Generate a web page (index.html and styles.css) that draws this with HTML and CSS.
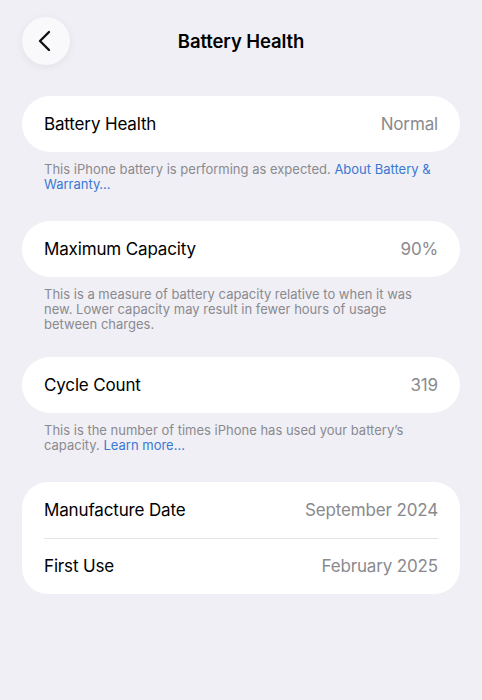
FILE: index.html
```html
<!DOCTYPE html>
<html lang="en">
<head>
<meta charset="utf-8">
<title>Battery Health</title>
<link rel="stylesheet" href="styles.css">
</head>
<body>
<div class="screen">
  <header class="nav">
    <button class="back" aria-label="Back">
      <svg width="16" height="22" viewBox="0 0 16 22"><path d="M12 2 L3 11 L12 20" fill="none" stroke="#111" stroke-width="2.4" stroke-linecap="round" stroke-linejoin="round"/></svg>
    </button>
    <h1 class="title">Battery Health</h1>
  </header>

  <section class="group">
    <div class="card">
      <div class="row"><span class="label">Battery Health</span><span class="value">Normal</span></div>
    </div>
    <p class="footer">This iPhone battery is performing as expected. <a class="link">About Battery &amp; Warranty…</a></p>
  </section>

  <section class="group group-tight">
    <div class="card">
      <div class="row"><span class="label">Maximum Capacity</span><span class="value">90%</span></div>
    </div>
    <p class="footer">This is a measure of battery capacity relative to when it was new. Lower capacity may result in fewer hours of usage between charges.</p>
  </section>

  <section class="group">
    <div class="card">
      <div class="row"><span class="label">Cycle Count</span><span class="value">319</span></div>
    </div>
    <p class="footer">This is the number of times iPhone has used your battery’s capacity. <a class="link">Learn more…</a></p>
  </section>

  <section class="group">
    <div class="card card-multi">
      <div class="row"><span class="label">Manufacture Date</span><span class="value">September 2024</span></div>
      <div class="row row-sep"><span class="label">First Use</span><span class="value">February 2025</span></div>
    </div>
  </section>
</div>
</body>
</html>
```

FILE: styles.css
```css
* { box-sizing: border-box; }
html, body {
  margin: 0;
  padding: 0;
  background: #f0eff5;
}
body {
  font-family: Inter, "Noto Sans", "Liberation Sans", sans-serif;
  color: #000;
  -webkit-font-smoothing: antialiased;
}
.screen {
  width: 482px;
  min-height: 700px;
  padding: 17px 22px 0;
}
.nav {
  position: relative;
  height: 48px;
  display: flex;
  align-items: center;
  justify-content: center;
  margin-bottom: 31px;
}
.back {
  position: absolute;
  left: 0;
  top: 0;
  width: 48px;
  height: 48px;
  border-radius: 50%;
  border: none;
  background: #f9f9fb;
  box-shadow: 0 2px 10px rgba(0,0,0,0.06);
  display: flex;
  align-items: center;
  justify-content: center;
  padding: 0 2px 0 0;
}
.title {
  margin: 0;
  font-size: 18.5px;
  font-weight: 600;
  letter-spacing: -0.1px;
}
.group {
  margin-bottom: 29px;
}
.group-tight {
  margin-bottom: 25px;
}
.card {
  background: #fff;
  border-radius: 28px;
}
.card-multi {
  border-radius: 26px;
}
.row {
  height: 56px;
  display: flex;
  align-items: center;
  justify-content: space-between;
  padding: 0 22px;
  font-size: 17px;
  letter-spacing: -0.15px;
}
.row-sep {
  position: relative;
}
.row-sep::before {
  content: "";
  position: absolute;
  left: 22px;
  right: 22px;
  top: 0;
  height: 1px;
  background: #e3e3e8;
}
.label { color: #000; }
.value { color: #8a8a8e; }
.footer {
  margin: 10px 0 0;
  padding: 0 22px;
  font-size: 13px;
  line-height: 15px;
  color: #8a8a8e;
}
.link {
  color: #3a78d4;
}
```
